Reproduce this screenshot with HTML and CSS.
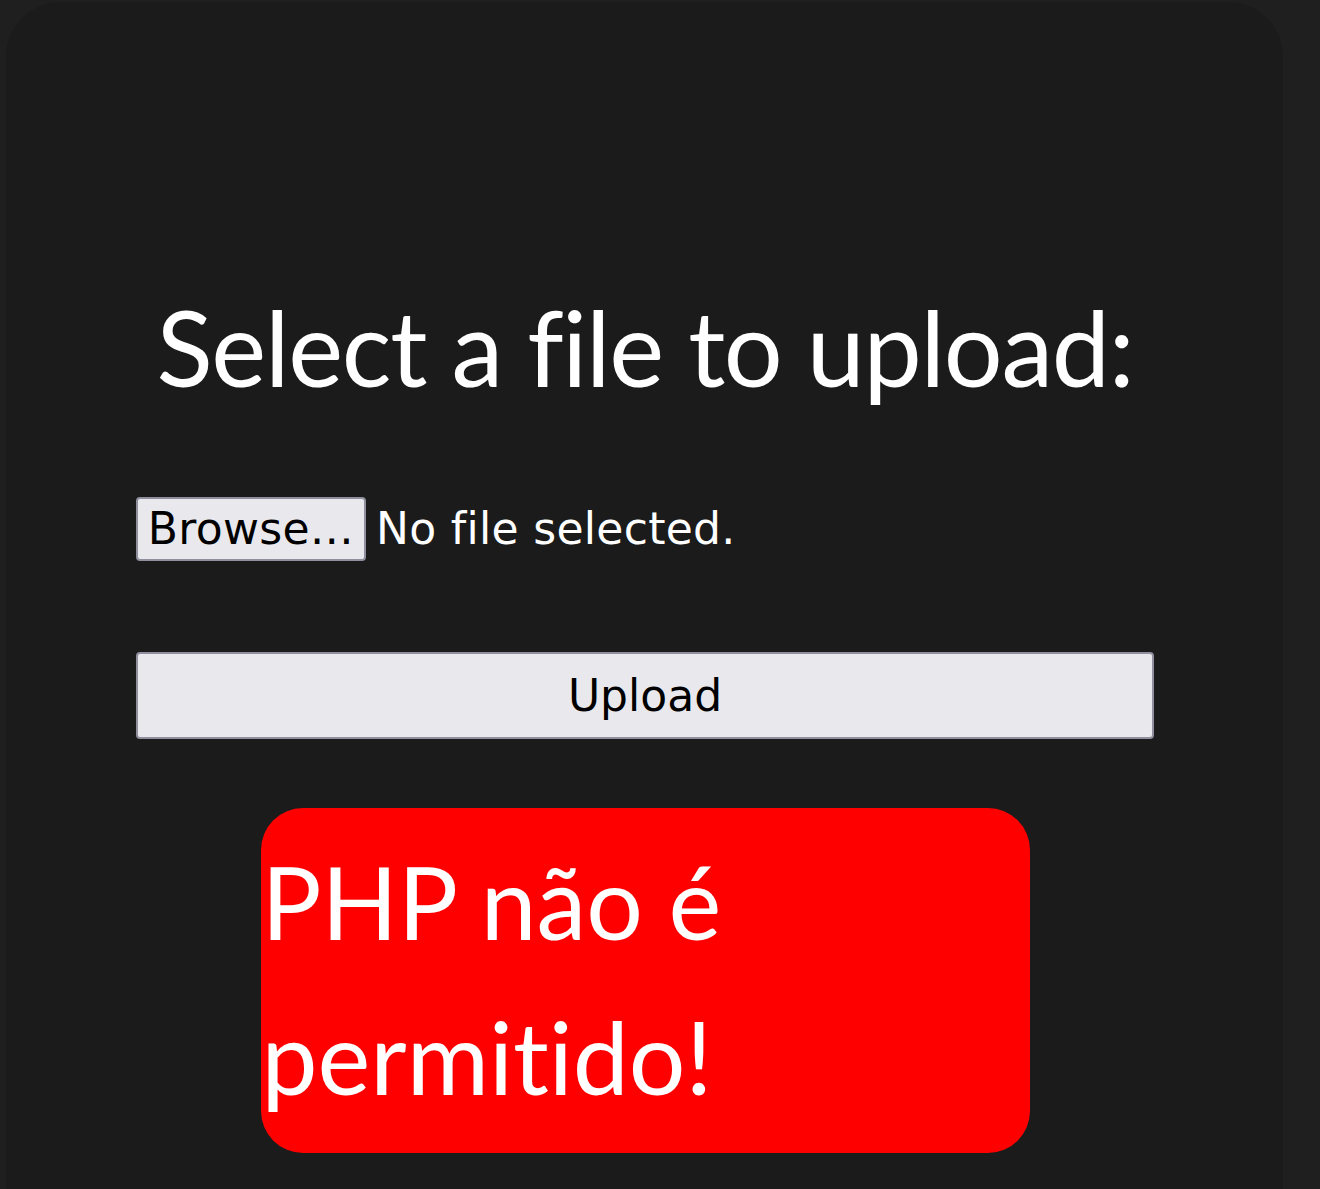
FILE: index.html
```html
<!DOCTYPE html>
<html lang="pt">
<head>
<meta charset="utf-8">
<title>Upload</title>
<link rel="stylesheet" href="styles.css">
</head>
<body>
<main class="card">
  <h1 class="title">Select a file to upload:</h1>
  <form class="upload-form">
    <div class="file-row">
      <button type="button" class="browse">Browse…</button>
      <span class="file-name">No file selected.</span>
    </div>
    <button type="button" class="submit">Upload</button>
  </form>
  <div class="alert">PHP não é permitido!</div>
</main>
</body>
</html>
```

FILE: styles.css
```css
html, body {
  margin: 0;
  padding: 0;
  background: #1f1f1f;
  overflow: hidden;
}

body {
  height: 1189px;
}

.card {
  margin: 2px 37px 0 6px;
  padding: 283px 129px 0 130px;
  min-height: 1300px;
  box-sizing: border-box;
  background: #1b1b1b;
  border-radius: 55px;
  display: flex;
  flex-direction: column;
}

.title {
  margin: 0;
  font-family: Lato, "Open Sans", sans-serif;
  font-weight: 400;
  font-size: 104px;
  line-height: 1.2;
  letter-spacing: -1.3px;
  white-space: nowrap;
  font-variant-ligatures: none;
  color: #ffffff;
  text-align: center;
}

.upload-form {
  display: flex;
  flex-direction: column;
  margin-top: 87px;
}

.file-row {
  display: flex;
  align-items: center;
  gap: 10px;
}

.browse,
.submit {
  font-family: "DejaVu Sans", sans-serif;
  font-size: 44px;
  line-height: 1.164;
  color: #000000;
  background: #e9e9ed;
  border: 2px solid #8f8f9d;
  border-radius: 4px;
  box-sizing: border-box;
}

.browse {
  height: 64px;
  padding: 0 6px;
  width: 230px;
  letter-spacing: 0.3px;
}

.file-name {
  font-family: "DejaVu Sans", sans-serif;
  font-size: 44px;
  letter-spacing: 0.3px;
  color: #ffffff;
}

.submit {
  margin-top: 91px;
  width: 100%;
  height: 87px;
  padding: 0;
}

.alert {
  align-self: center;
  width: 769px;
  margin-top: 69px;
  padding: 16px 0 19px 1px;
  box-sizing: border-box;
  background: #ff0000;
  border-radius: 42px;
  color: #ffffff;
  font-family: Lato, "Open Sans", sans-serif;
  font-size: 100px;
  line-height: 155px;
  font-variant-ligatures: none;
}
```
